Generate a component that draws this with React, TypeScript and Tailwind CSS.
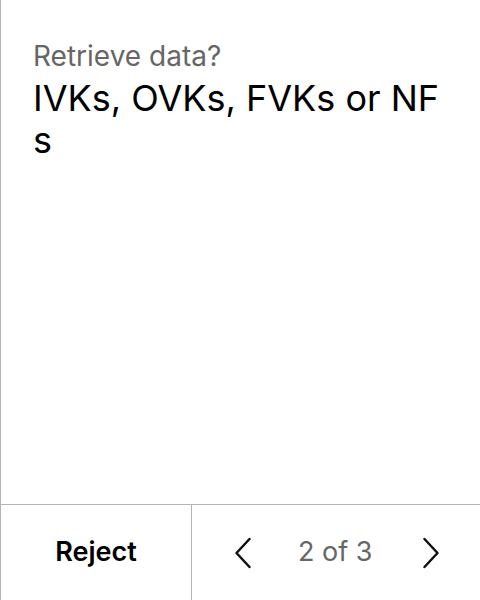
import React from 'react';

const Chevron = ({ dir }: { dir: 'left' | 'right' }) => (
  <svg width="24" height="32" viewBox="0 0 24 32" fill="none" className="shrink-0">
    <polyline
      points={dir === 'left' ? '18.5,2 5.5,16 18.5,30' : '5.5,2 18.5,16 5.5,30'}
      stroke="#111"
      strokeWidth="2.5"
      strokeLinecap="round"
      strokeLinejoin="round"
    />
  </svg>
);

const App: React.FC = () => {
  return (
    <div
      className="h-screen w-full flex flex-col bg-white border-l border-[#b3b3b3]"
      style={{ fontFamily: 'Inter, "Noto Sans", sans-serif' }}
    >
      <div className="flex-1 px-8 pt-[39px]">
        <p className="text-[28px] leading-[34px] text-[#666666]">Retrieve data?</p>
        <p className="mt-[4px] text-[36px] leading-[42px] text-black break-all">IVKs, OVKs, FVKs or NFs</p>
      </div>
      <div className="h-[96px] flex border-t border-[#b3b3b3]">
        <button className="w-[191px] border-r border-[#b3b3b3] flex items-center justify-center text-[27px] font-semibold text-black">
          Reject
        </button>
        <div className="flex-1 flex items-center pl-[39px]">
          <Chevron dir="left" />
          <span className="ml-[43px] text-[27px] text-[#666666]">2 of 3</span>
          <span className="ml-[46px]">
            <Chevron dir="right" />
          </span>
        </div>
      </div>
    </div>
  );
};

export default App;
